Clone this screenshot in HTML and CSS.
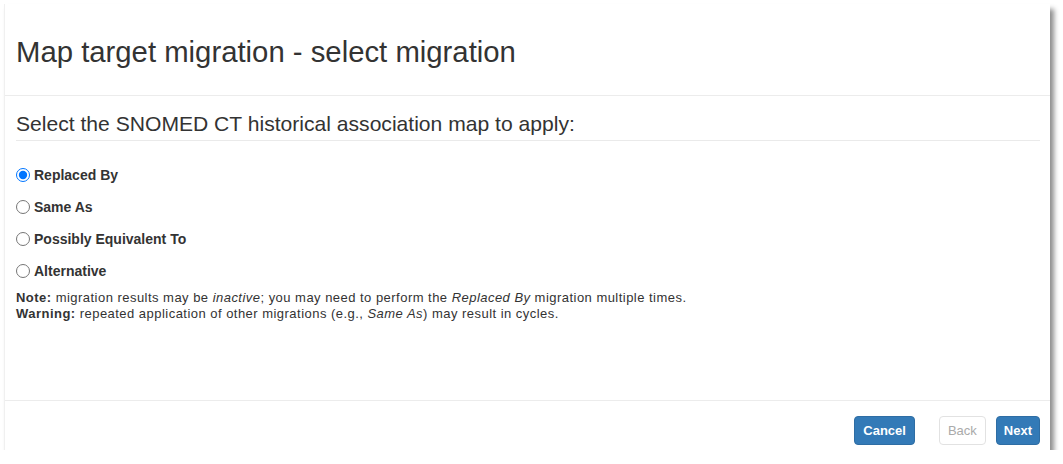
FILE: index.html
```html
<!DOCTYPE html>
<html lang="en">
<head>
    <meta charset="UTF-8">
    <title>Map target migration</title>
    <link rel="stylesheet" href="styles.css">
</head>
<body>
    <div class="modal">
        <div class="modal-header">
            <h1 class="modal-title">Map target migration - select migration</h1>
        </div>

        <div class="modal-body">
            <h2 class="section-title">Select the SNOMED CT historical association map to apply:</h2>

            <div class="options">
                <label class="option"><input type="radio" name="map" checked> Replaced By</label>
                <label class="option"><input type="radio" name="map"> Same As</label>
                <label class="option"><input type="radio" name="map"> Possibly Equivalent To</label>
                <label class="option"><input type="radio" name="map"> Alternative</label>
            </div>

            <div class="notes">
                <p><b>Note:</b> migration results may be <i>inactive</i>; you may need to perform the <i>Replaced By</i> migration multiple times.</p>
                <p><b>Warning:</b> repeated application of other migrations (e.g., <i>Same As</i>) may result in cycles.</p>
            </div>
        </div>

        <div class="modal-footer">
            <button class="btn btn-primary btn-cancel">Cancel</button>
            <button class="btn btn-default" disabled>Back</button>
            <button class="btn btn-primary">Next</button>
        </div>
    </div>
</body>
</html>
```

FILE: styles.css
```css
body {
    margin: 0;
    background: #ffffff;
    font-family: "Liberation Sans", Arial, sans-serif;
    color: #333333;
}

.modal {
    margin: 4px 0 0 4px;
    width: 1046px;
    height: 446px;
    background: #ffffff;
    border-left: 1px solid #f0f0f0;
    box-shadow: 4px 5px 5px rgba(0, 0, 0, 0.45);
    display: flex;
    flex-direction: column;
    box-sizing: border-box;
}

.modal-header {
    height: 92px;
    padding: 5px 11px 0;
    box-sizing: border-box;
    border-bottom: 1px solid #ececec;
    display: flex;
    align-items: center;
}

.modal-title {
    margin: 0;
    font-size: 29.3px;
    font-weight: normal;
    color: #333333;
}

.modal-body {
    flex: 1;
    padding: 16px 10px 0 11px;
}

.section-title {
    margin: 0;
    padding-bottom: 4px;
    font-size: 21.1px;
    font-weight: normal;
    border-bottom: 1px solid #eaeaea;
}

.options {
    display: flex;
    flex-direction: column;
    gap: 13px;
    margin-top: 24px;
}

.option {
    display: flex;
    align-items: center;
    gap: 4px;
    height: 19px;
    font-size: 14px;
    font-weight: bold;
}

.option input {
    margin: 0;
    width: 14px;
    height: 14px;
}

.notes {
    margin-top: 10px;
    font-size: 13px;
    line-height: 16px;
    letter-spacing: 0.47px;
}

.notes p {
    margin: 0;
}

.modal-footer {
    border-top: 1px solid #ececec;
    padding: 15px 10px 5px;
    display: flex;
    justify-content: flex-end;
    gap: 10px;
}

.btn {
    height: 29px;
    padding: 0 7px;
    border-radius: 4px;
    font-family: "Liberation Sans", Arial, sans-serif;
    font-size: 13px;
    font-weight: bold;
    border: 1px solid transparent;
}

.btn-primary {
    background: #337ab7;
    border-color: #2e6da4;
    color: #ffffff;
}

.btn-default {
    padding: 0 8px;
    background: #ffffff;
    border-color: #e2e2e2;
    color: #aaaaaa;
    font-weight: normal;
}

.btn-cancel {
    padding: 0 8px;
    margin-right: 14px;
}
```
